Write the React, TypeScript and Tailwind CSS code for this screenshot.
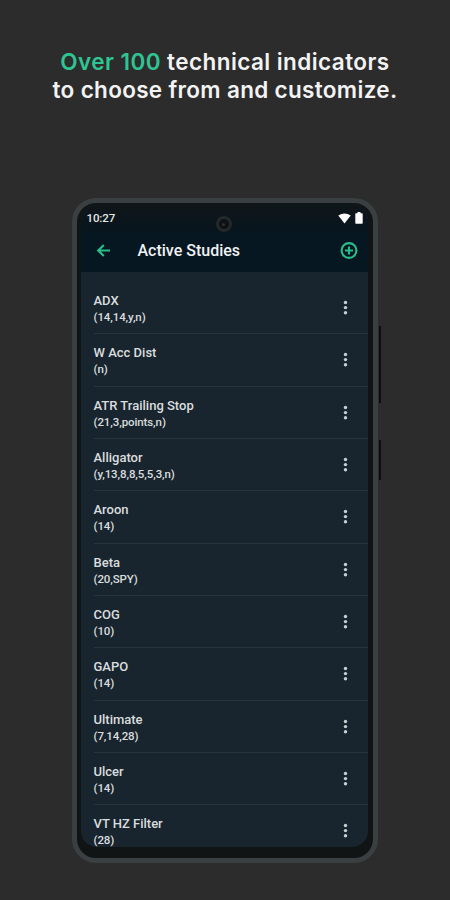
const studies: [string, string][] = [
  ["ADX", "(14,14,y,n)"],
  ["W Acc Dist", "(n)"],
  ["ATR Trailing Stop", "(21,3,points,n)"],
  ["Alligator", "(y,13,8,8,5,5,3,n)"],
  ["Aroon", "(14)"],
  ["Beta", "(20,SPY)"],
  ["COG", "(10)"],
  ["GAPO", "(14)"],
  ["Ultimate", "(7,14,28)"],
  ["Ulcer", "(14)"],
  ["VT HZ Filter", "(28)"],
];

function StatusBar() {
  return (
    <div className="relative flex h-[29px] shrink-0 items-center justify-between bg-gradient-to-b from-[#101619] to-[#07151e] pt-px pr-[5px] pl-[6px]">
      <span className="text-[11.5px] leading-[14px] font-medium tracking-[-0.1px] text-[#e4e6e7]">10:27</span>
      <div className="flex items-center gap-[4px]">
        <svg width="13" height="11" viewBox="0 0 13 11" fill="#fff">
          <path d="M0.3 2.4Q6.5-1.6 12.7 2.4L6.5 10.6Z" />
        </svg>
        <svg width="8" height="12" viewBox="0 0 8 12" fill="#fff">
          <path d="M2.5 0h3v1.2H7q.7 0 .7.7v9q0 .8-.7.8H1q-.7 0-.7-.8v-9q0-.7.7-.7h1.5z" />
        </svg>
      </div>
      <div className="absolute top-[13px] left-[135px] flex size-[16px] items-center justify-center rounded-full border-[3px] border-[#23282a] bg-[#0d1113]">
        <div className="size-[3px] rounded-full bg-[#2b3032]" />
      </div>
    </div>
  );
}

function AppBar() {
  return (
    <div className="flex h-[40px] shrink-0 items-center bg-[#061722] pr-[10px] pl-[15px] pb-[3px]">
      <svg width="15" height="14" viewBox="0 0 15 14" fill="none" stroke="#27be89" strokeWidth="2.1">
        <path d="M14 6.5H2.2M7.8 1L2.2 6.5l5.6 5.5" />
      </svg>
      <h2 className="ml-[27px] flex-1 text-[16px] leading-5 font-medium text-[#f0f2f3]">Active Studies</h2>
      <svg width="18" height="18" viewBox="0 0 18 18" fill="none" stroke="#27be89" strokeWidth="2.1">
        <circle cx="9" cy="8.5" r="7.4" />
        <path d="M9 4.5v8M5 8.5h8" />
      </svg>
    </div>
  );
}

function StudyRow({ name, params }: { name: string; params: string }) {
  return (
    <li className="ml-[13px] flex h-[52.33px] shrink-0 items-start justify-between border-b border-[#26343c] pt-[11px] pr-[20px]">
      <div className="text-[#d9dddf]">
        <div className="text-[13px] leading-4 font-medium">{name}</div>
        <div className="text-[11.5px] leading-4 font-medium tracking-[-0.1px]">{params}</div>
      </div>
      <svg className="mt-[7px]" width="5" height="15" viewBox="0 0 5 15" fill="#c9d0d4">
        <circle cx="2.5" cy="2.5" r="1.7" />
        <circle cx="2.5" cy="7.6" r="1.7" />
        <circle cx="2.5" cy="12.7" r="1.7" />
      </svg>
    </li>
  );
}

export default function App() {
  return (
    <main className="flex h-[900px] w-[450px] flex-col items-center overflow-hidden bg-[#2c2c2c] font-['Roboto',sans-serif]">
      <h1 className="mt-[48px] h-[150px] text-center font-['Inter',sans-serif] text-[22.5px] leading-[27.5px] font-semibold tracking-[0.32px] whitespace-nowrap text-[#f3f3f3]">
        <span className="tracking-[0.43px]">
          <span className="text-[#2fc592]">Over 100</span> technical indicators
        </span>
        <br />
        to choose from and customize.
      </h1>
      <div className="relative mr-px h-[665px] w-[306px] rounded-[24px] border-[5px] border-[#3a4041] bg-[#101415] pr-[5px] pb-[11px] pl-[4px]">
        <div className="absolute top-[123px] -right-[8px] h-[77px] w-[2px] bg-[#0d0f0f]" />
        <div className="absolute top-[237px] -right-[8px] h-[40px] w-[2px] bg-[#0d0f0f]" />
        <div className="flex h-full flex-col overflow-hidden rounded-t-[18px] rounded-b-[16px] bg-[#19252e]">
          <StatusBar />
          <AppBar />
          <ul className="flex flex-col pt-[10px]">
            {studies.map(([name, params]) => (
              <StudyRow key={name} name={name} params={params} />
            ))}
          </ul>
        </div>
      </div>
    </main>
  );
}
